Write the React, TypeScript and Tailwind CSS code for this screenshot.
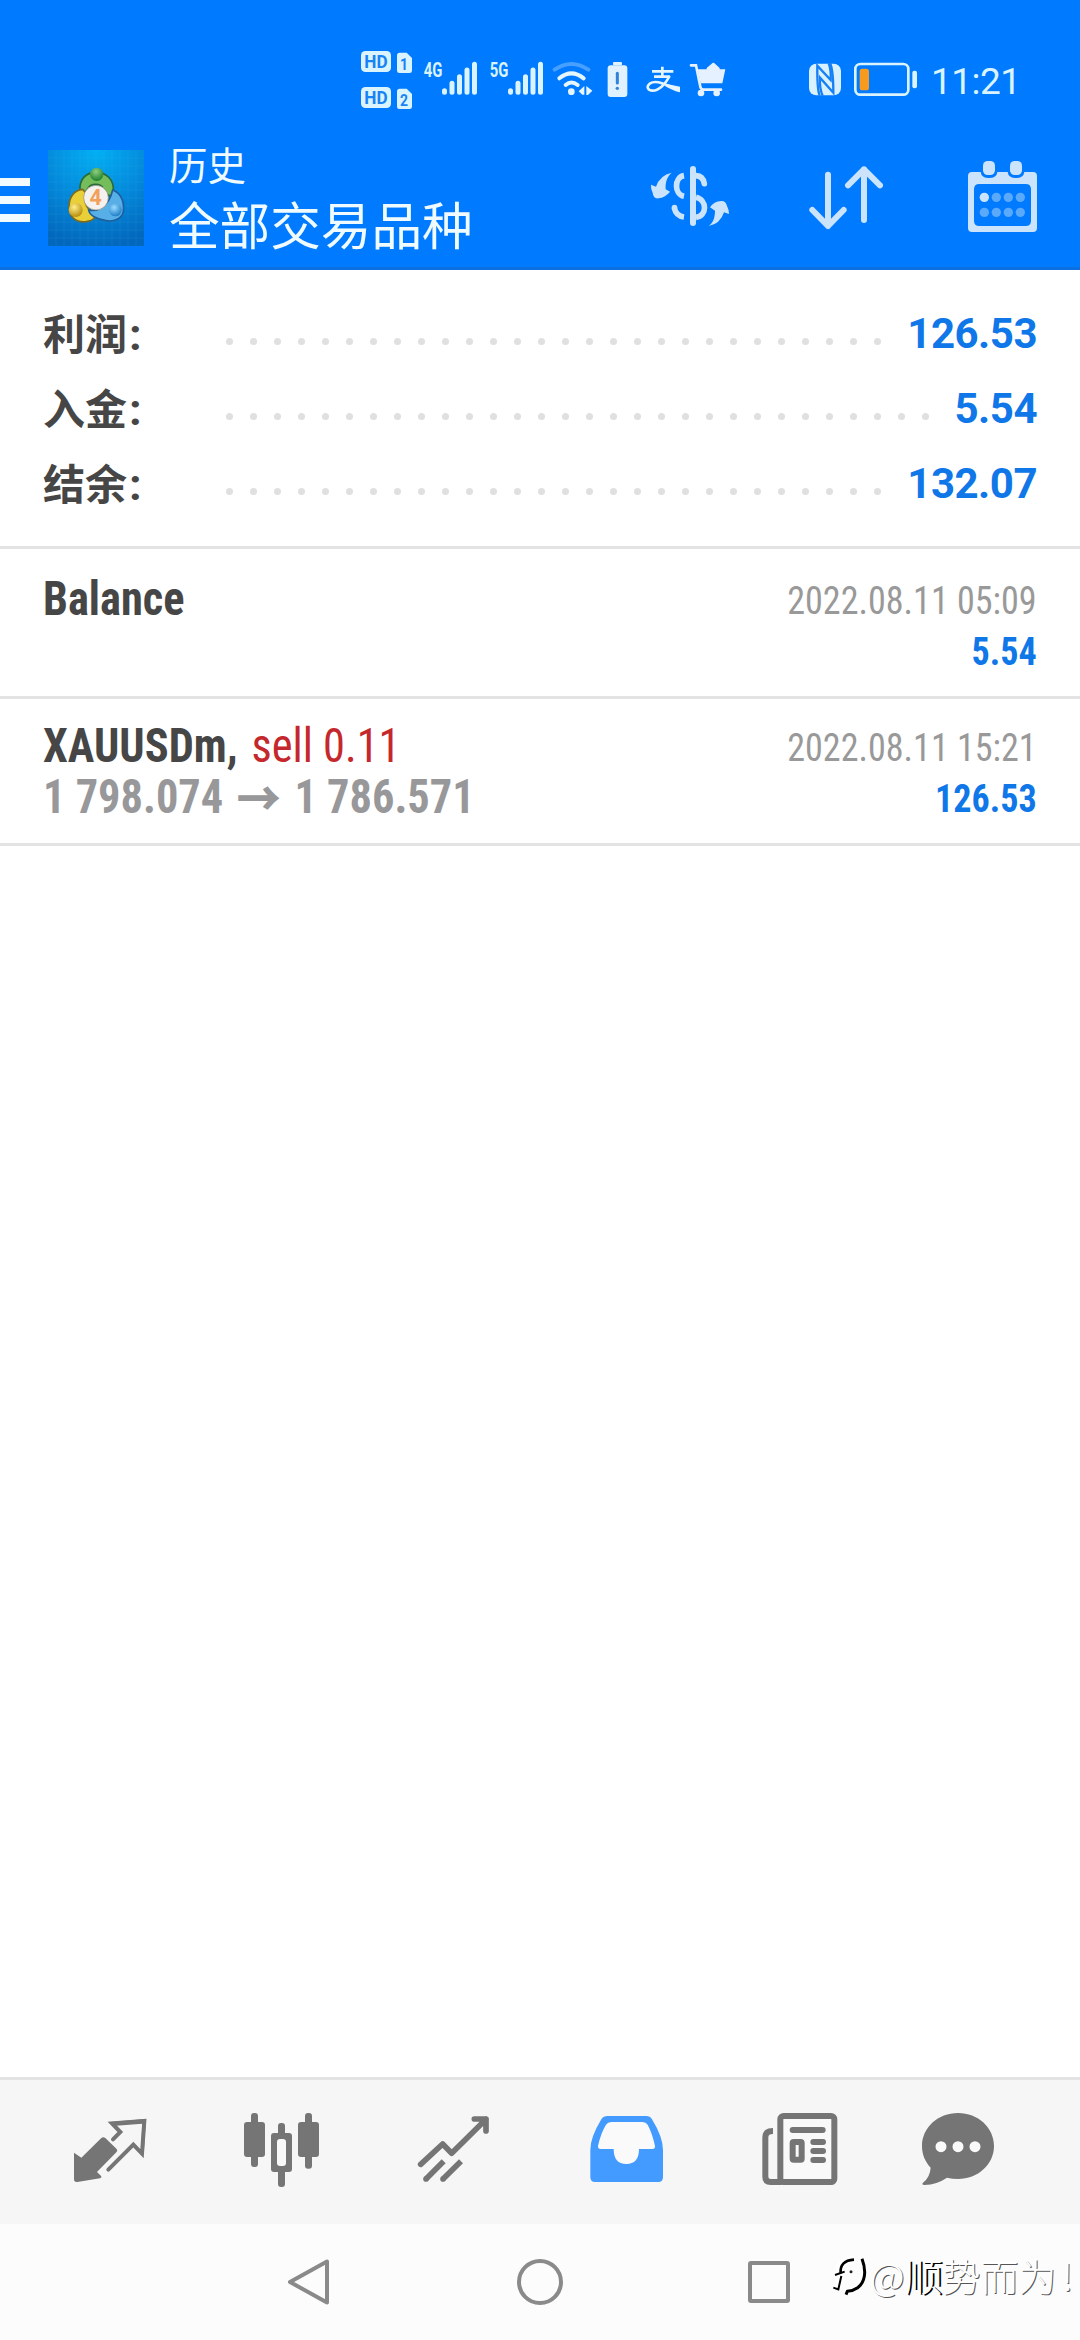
interface SummaryRowProps {
	label: string;
	value: string;
	dots: number;
}

interface HistoryItemProps {
	name: string;
	side?: string;
	open?: string;
	close?: string;
	time: string;
	profit: string;
}

function SimBadge({ y, n }: { y: number; n: number }) {
	return (
		<g>
			<rect x="63" y={y} width="90" height="63" rx="13" fill="#d9f3ff" />
			<text
				x="108"
				y={y + 51}
				textAnchor="middle"
				textLength="70"
				lengthAdjust="spacingAndGlyphs"
				fontSize="56"
				fontWeight="700"
				fill="#1783f5"
			>
				HD
			</text>
			<path
				d={`M179 ${y + 5}h21l16 16v38q0 7-7 7h-31q-7 0-7-7v-46q0-8 8-8z`}
				fill="#d9f3ff"
			/>
			<text
				x="192"
				y={y + 56}
				textAnchor="middle"
				textLength="24"
				lengthAdjust="spacingAndGlyphs"
				fontSize="52"
				fontWeight="700"
				fill="#1783f5"
			>
				{n}
			</text>
		</g>
	);
}

function Signal({ label }: { label: string }) {
	return (
		<svg viewBox="249 60 165 180" className="w-[55px] h-[60px]">
			<text
				x="251"
				y="141"
				textLength="56"
				lengthAdjust="spacingAndGlyphs"
				fontSize="62"
				fontWeight="700"
				fill="#d9f3ff"
			>
				{label}
			</text>
			<g stroke="#d9f3ff" strokeWidth="15" strokeLinecap="round">
				<path d="M313.500 182v5M336 160v27M358.500 140v47M381 120v67M403.500 103v84" />
			</g>
		</svg>
	);
}

function StatusBar() {
	return (
		<div className="flex flex-row h-[128px] pt-[50px] pl-[360px]">
			<svg viewBox="60 60 159 180" className="w-[53px] h-[60px]">
				<SimBadge y={63} n={1} />
				<SimBadge y={171} n={2} />
			</svg>
			<div className="ml-[10px]">
				<Signal label="4G" />
			</div>
			<div className="ml-[11px]">
				<Signal label="5G" />
			</div>
			<svg viewBox="636 60 123 180" className="ml-[8px] w-[41px] h-[60px]">
				<g fill="none" strokeWidth="12" strokeLinecap="round">
					<path d="M644 119Q694 85 745 119" stroke="#47a0ff" />
					<path d="M658 145Q694 115 731 145" stroke="#e6f6ff" />
					<path d="M677 165Q694 150 713 165" stroke="#e6f6ff" />
				</g>
				<circle cx="694" cy="185" r="10" fill="#e6f6ff" />
				<path d="M716 184l17-16v26h-6zM739 168l18 14-13 13h-5z" fill="#e6f6ff" />
			</svg>
			<svg viewBox="801 60 63 180" className="ml-[14px] w-[21px] h-[60px]">
				<rect x="819" y="96" width="27" height="10" rx="3" fill="#e0f1ff" />
				<rect x="803" y="106" width="59" height="95" rx="9" fill="#e0f1ff" />
				<path d="M832 130v29" stroke="#2f83d8" strokeWidth="9" strokeLinecap="round" />
				<circle cx="832" cy="175" r="5" fill="#2f83d8" />
			</svg>
			<svg viewBox="918 60 105 180" className="ml-[18px] w-[35px] h-[60px]">
				<g fill="none" stroke="#e6f6ff" strokeWidth="8">
					<path d="M936 124h64M967 110v31M942 140h48" />
					<path d="M989 138C975 165 955 182 938 182C922 182 919 169 929 161C950 147 975 165 1018 180" />
				</g>
				<path d="M985 163l35 7v17q-20-4-45-19z" fill="#e6f6ff" />
			</svg>
			<svg viewBox="1047 60 111 180" className="ml-[8px] w-[37px] h-[60px]">
				<path
					d="M1053 106h15l13 64q2 9 10 9h52"
					fill="none"
					stroke="#e6f1ff"
					strokeWidth="8"
					strokeLinecap="round"
				/>
				<path d="M1073 118h83l-9 42h-65zM1100 119v-5l15-13q5-5 10 0l14 13v5z" fill="#e6f1ff" />
				<circle cx="1083" cy="189" r="10" fill="#e6f1ff" />
				<circle cx="1130" cy="189" r="10" fill="#e6f1ff" />
			</svg>
			<svg viewBox="204 60 102 180" className="ml-[82px] w-[34px] h-[60px]">
				<rect x="207" y="101" width="96" height="95" rx="22" fill="#d9f0ff" />
				<g fill="none" stroke="#1680f5" strokeWidth="7">
					<path d="M239 197Q231 176 232 107L272 150Q274 120 266 100" />
					<path d="M270 98Q280 120 280 188L240 143Q238 176 248 197" />
				</g>
			</svg>
			<svg viewBox="339 60 195 180" className="ml-[11px] w-[65px] h-[60px]">
				<rect x="346" y="102" width="159" height="92" rx="15" fill="none" stroke="#d9f3ff" strokeWidth="8" />
				<rect x="359" y="116" width="28" height="65" rx="8" fill="#f79a1e" />
				<rect x="517" y="122" width="14" height="53" rx="6" fill="#d9f3ff" />
			</svg>
			<div className="ml-[13px] h-[62px] leading-[63px] text-[37px] text-[#d9f3ff] tracking-[-0.5px]">
				11:21
			</div>
		</div>
	);
}

function Logo() {
	return (
		<svg viewBox="144 60 288 288" className="ml-[18px] w-[96px] h-[96px]">
			<defs>
				<radialGradient id="sky" cx="0.5" cy="0" r="1">
					<stop offset="0" stopColor="#02b0f4" />
					<stop offset="0.55" stopColor="#0488da" />
					<stop offset="1" stopColor="#0268bd" />
				</radialGradient>
				<radialGradient id="green" cx="0.45" cy="0.3" r="0.7">
					<stop offset="0" stopColor="#8fcf80" />
					<stop offset="1" stopColor="#1d7f2c" />
				</radialGradient>
				<radialGradient id="gold" cx="0.4" cy="0.3" r="0.7">
					<stop offset="0" stopColor="#fff08a" />
					<stop offset="1" stopColor="#b98d0c" />
				</radialGradient>
				<radialGradient id="blue" cx="0.4" cy="0.3" r="0.7">
					<stop offset="0" stopColor="#9bdcff" />
					<stop offset="1" stopColor="#1f7fc8" />
				</radialGradient>
			</defs>
			<rect x="144" y="60" width="288" height="288" fill="url(#sky)" />
			<path
				d="M168 60v288M192 60v288M216 60v288M240 60v288M264 60v288M288 60v288M312 60v288M336 60v288M360 60v288M384 60v288M408 60v288M144 84h288M144 108h288M144 132h288M144 156h288M144 180h288M144 204h288M144 228h288M144 252h288M144 276h288M144 300h288M144 324h288"
				stroke="#5cc4f5"
				strokeOpacity="0.18"
				strokeWidth="2"
			/>
			<g strokeWidth="5">
				<path
					d="M240 178C238 150 256 127 288 127C320 127 342 150 340 182C336 205 322 200 312 178C302 158 272 158 262 178C256 190 242 190 240 178z"
					fill="#74bd5a"
					stroke="#276b38"
				/>
				<path
					d="M248 178C222 180 207 202 207 232C208 262 228 278 258 275C282 272 292 258 282 248C262 240 250 220 258 190z"
					fill="#e9cf38"
					stroke="#7d6a20"
				/>
				<path
					d="M338 180C360 188 374 212 370 244C366 266 342 276 318 272C290 268 268 256 266 240C290 246 326 232 338 180z"
					fill="#58afe8"
					stroke="#1d5f9c"
				/>
			</g>
			<circle cx="290" cy="133" r="20" fill="url(#green)" />
			<circle cx="227" cy="240" r="21" fill="url(#gold)" />
			<circle cx="346" cy="240" r="19" fill="url(#blue)" />
			<circle cx="288" cy="203" r="37" fill="#f4f1ee" stroke="#8d8a72" strokeWidth="2" />
			<text x="287" y="226" textAnchor="middle" fontSize="64" fontWeight="700" fill="#f2a05a">
				4
			</text>
		</svg>
	);
}

function Toolbar() {
	return (
		<div className="flex flex-row items-center h-[139px]">
			<div className="flex flex-col gap-[10px] w-[30px] pt-[5px]">
				<div className="h-[8px] bg-[#f0faff]" />
				<div className="h-[8px] bg-[#f0faff]" />
				<div className="h-[8px] bg-[#f0faff]" />
			</div>
			<Logo />
			<div className="ml-[25px] w-[481px] flex flex-col text-[#effbff] font-['Noto_Sans_CJK_SC',sans-serif]">
				<div className="text-[38.5px] leading-[50px]">历史</div>
				<div className="text-[50.6px] leading-[70px]">全部交易品种</div>
			</div>
			<svg viewBox="90 60 240 225" className="w-[80px] h-[75px]">
				<g fill="none" stroke="#cbe4fb" strokeLinecap="round">
					<path d="M219 87v162" strokeWidth="18" />
					<path d="M228 107Q249 108 253 131" strokeWidth="17" />
					<path d="M163 204Q168 228 192 231" strokeWidth="17" strokeLinecap="butt" />
					<path d="M192 107C162 112 162 163 192 169" strokeWidth="17" strokeLinecap="butt" />
					<path d="M228 172C262 180 262 228 228 232" strokeWidth="17" strokeLinecap="butt" />
				</g>
				<circle cx="163.500" cy="203" r="8.500" fill="#cbe4fb" />
				<path d="M155 98C139 112 136 130 137 148L150 155Q137 172 115 175Q100 177 98 158Q92 147 93 134L108 140Q120 105 155 98z" fill="#cbe4fb" />
				<path d="M266 258C280 248 285 232 285 212L270 202Q281 184 304 183Q317 182 321 198Q327 209 327 222L312 217Q301 252 266 258z" fill="#cbe4fb" />
			</svg>
			<svg viewBox="567 60 222 225" className="ml-[79px] w-[74px] h-[75px]">
				<path
					d="M624 104v154M577 210l47 48 47-48M732 240V88M684 136l48-48 48 48"
					fill="none"
					stroke="#cbe4fb"
					strokeWidth="18"
					strokeLinecap="round"
					strokeLinejoin="round"
				/>
			</svg>
			<svg viewBox="1041 60 213 225" className="ml-[84px] w-[71px] h-[75px]">
				<path
					d="M1056 96h26q2 18 25 18t25-18h31q2 18 25 18t25-18h26q12 0 12 12v156q0 12-12 12h-183q-12 0-12-12v-156q0-12 12-12zM1078 132q-16 0-16 16v94q0 16 16 16h139q16 0 16-16v-94q0-16-16-16z"
					fill="#cbe4fb"
					fillRule="evenodd"
				/>
				<rect x="1089" y="63" width="36" height="42" rx="14" fill="#cbe4fb" />
				<rect x="1170" y="63" width="36" height="42" rx="14" fill="#cbe4fb" />
				<circle cx="1093" cy="172" r="14" fill="#cbe4fb" />
				<g fill="#5aa9fb">
					<circle cx="1129" cy="172" r="14" />
					<circle cx="1165" cy="172" r="14" />
					<circle cx="1201" cy="172" r="14" />
					<circle cx="1093" cy="217" r="14" />
					<circle cx="1129" cy="217" r="14" />
					<circle cx="1165" cy="217" r="14" />
					<circle cx="1201" cy="217" r="14" />
				</g>
			</svg>
		</div>
	);
}

function SummaryRow({ label, value, dots }: SummaryRowProps) {
	return (
		<div className="flex flex-row items-center h-[75px]">
			<div className="w-[183px] pt-[2px] text-[42px] leading-[75px] font-bold text-[#464646] whitespace-nowrap">
				{label}
				<span className="ml-[2px] text-[45px]">:</span>
			</div>
			<div className="flex flex-row gap-[17px] pt-[16px]">
				{Array.from({ length: dots }, (_, i) => (
					<div key={i} className="w-[7px] h-[7px] rounded-full bg-[#e0e0e0]" />
				))}
			</div>
			<div className="ml-auto text-[42px] leading-[75px] font-bold text-[#0f77e8] tracking-[-0.5px]">
				{value}
			</div>
		</div>
	);
}

function HistoryItem({ name, side, open, close, time, profit }: HistoryItemProps) {
	return (
		<div className="flex flex-row justify-between h-[147px] pt-[21px] pl-[43px] pr-[43px] border-b-[3px] border-[#e3e3e3] font-stretch-condensed font-['Roboto_Condensed',Roboto,sans-serif]">
			<div className="flex flex-col text-[48px] leading-[51px] whitespace-nowrap origin-left scale-x-[0.925]">
				<div className="flex flex-row gap-[15px]">
					<div className="font-bold text-[#464646]">{name}</div>
					{side && <div className="text-[#c4282d]">{side}</div>}
				</div>
				{open && (
					<div className="flex flex-row font-bold text-[#98989a]">
						<div>{open}</div>
						<div className="w-[77px] text-center leading-[48px] font-black font-['Noto_Sans_CJK_SC',sans-serif]">
							→
						</div>
						<div>{close}</div>
					</div>
				)}
			</div>
			<div className="flex flex-col pt-[3px] text-[39px] leading-[51px] text-right origin-right scale-x-[0.925]">
				<div className="text-[#999999]">{time}</div>
				<div className="font-bold text-[#0f77e8]">{profit}</div>
			</div>
		</div>
	);
}

function TabBar() {
	return (
		<div className="flex flex-row items-center h-[147px] pl-[73px] bg-[#f6f6f6] border-t-[3px] border-[#e3e3e3]">
			<svg viewBox="99 156 222 240" className="w-[74px] h-[80px]">
				<path
					d="M102 278L124 293L184 234Q190 229 196 234L230 267Q234 272 229 277L171 336L184 349Q185 354 180 355L112 366Q102 367 102 358z"
					fill="#757575"
				/>
				<path
					d="M219 238L241 216L216 190L313 183L306 281L280 254L205 329"
					fill="none"
					stroke="#757575"
					strokeWidth="12"
					strokeLinecap="round"
				/>
				<path d="M211 186l107-9-7 108-8-2 4-92-88 7z" fill="#757575" />
			</svg>
			<svg viewBox="609 156 231 240" className="ml-[96px] w-[77px] h-[80px]">
				<g fill="#757575">
					<rect x="633" y="159" width="21" height="162" rx="9" />
					<rect x="612" y="186" width="63" height="105" rx="9" />
					<rect x="795" y="159" width="21" height="167" rx="9" />
					<rect x="774" y="186" width="63" height="105" rx="9" />
					<rect x="714" y="189" width="21" height="192" rx="9" />
					<rect x="693" y="219" width="63" height="117" rx="9" />
				</g>
				<rect x="711" y="237" width="27" height="81" rx="9" fill="#f8f8f8" />
			</svg>
			<svg viewBox="1131 156 219 240" className="ml-[97px] w-[73px] h-[80px]">
				<path
					d="M1142 313L1208 252L1235 280L1338 178M1303 177h35v36"
					fill="none"
					stroke="#757575"
					strokeWidth="17"
					strokeLinecap="round"
					strokeLinejoin="round"
				/>
				<path d="M1158 357L1211 304M1209 357L1263 304" stroke="#757575" strokeWidth="17" />
				<circle cx="1158" cy="357" r="8.500" fill="#757575" />
				<circle cx="1209" cy="357" r="8.500" fill="#757575" />
			</svg>
			<svg viewBox="150 156 219 240" className="ml-[100px] w-[73px] h-[80px]">
				<path
					d="M203 168H319Q330 168 336 178Q369 232 369 270V352Q369 366 355 366H165Q151 366 151 352V270Q151 232 184 178Q190 168 203 168z"
					fill="#439bff"
				/>
				<path
					d="M214 186H307Q318 186 323 194Q337 220 345 258Q346 267 337 267H297C297 297 284 312 259 312C234 312 221 297 221 267H182Q173 267 174 258Q182 220 198 194Q203 186 214 186z"
					fill="#fafafa"
				/>
			</svg>
			<svg viewBox="666 156 228 240" className="ml-[99px] w-[76px] h-[80px]">
				<g fill="none" stroke="#757575" strokeWidth="18">
					<rect x="721" y="168" width="162" height="198" rx="10" fill="#f9f9f9" />
					<path d="M699 213Q676 213 676 232V350Q676 366 692 366H725" />
				</g>
				<g stroke="#757575" strokeWidth="18" strokeLinecap="round">
					<path d="M758 210h90M820 246h29M820 273h29M820 300h29" />
				</g>
				<rect x="758" y="246" width="27" height="53" rx="3" fill="#f9f9f9" stroke="#757575" strokeWidth="18" />
			</svg>
			<svg viewBox="1143 156 222 240" className="ml-[83px] w-[74px] h-[80px]">
				<path
					d="M1254 159C1314 159 1362 203 1362 258C1362 313 1314 357 1254 357Q1236 357 1221 353Q1190 374 1154 375Q1143 374 1149 368Q1170 352 1172 323C1156 306 1146 284 1146 258C1146 203 1194 159 1254 159z"
					fill="#757575"
				/>
				<g fill="#fafafa">
					<circle cx="1203" cy="260" r="16.500" />
					<circle cx="1254" cy="260" r="16.500" />
					<circle cx="1305" cy="260" r="16.500" />
				</g>
			</svg>
		</div>
	);
}

function SystemNav() {
	return (
		<div className="relative flex flex-row items-center h-[116px] pl-[287px] bg-[#fcfcfc]">
			<svg viewBox="0 0 43 48" className="w-[43px] h-[48px]">
				<path d="M40 3.500V44.500L3 24z" fill="none" stroke="#8a8a8a" strokeWidth="4" strokeLinejoin="round" />
			</svg>
			<div className="ml-[187px] w-[46px] h-[46px] rounded-full border-4 border-[#8a8a8a]" />
			<div className="ml-[185px] w-[42px] h-[42px] rounded-[3px] border-4 border-[#8a8a8a]" />
			{/* author mark laid over the corner */}
			<div className="absolute left-[830px] top-[26px] flex flex-row items-center">
				<svg viewBox="60 60 120 150" className="w-[40px] h-[50px]">
					<g fill="none">
						<path d="M88 132V112Q95 84 132 84M82 172L94 132M74 134L94 122M164 84Q176 140 128 172L112 188" stroke="#ffffff" strokeWidth="22" />
						<path d="M92 124Q88 86 132 83" stroke="#000000" strokeWidth="8" />
						<path d="M75 129L104 119M94 132L85 172L70 167" stroke="#000000" strokeWidth="6" />
						<path d="M156 80C171 120 164 152 143 167Q130 176 112 178L108 188" stroke="#000000" strokeWidth="9" />
					</g>
					<circle cx="123" cy="119" r="4.500" fill="#222222" />
				</svg>
				<div className="text-[38px] leading-[50px] h-[54px] font-light text-white whitespace-nowrap [text-shadow:1px_1px_0_#555555] font-['Noto_Sans_CJK_SC',sans-serif]">
					@<span className="[text-shadow:2px_1px_0_#000000]">顺</span>势而为
					<span className="ml-[5px]">!</span>
				</div>
			</div>
		</div>
	);
}

export default function App() {
	let summary = [
		{ label: "利润", value: "126.53", dots: 28 },
		{ label: "入金", value: "5.54", dots: 30 },
		{ label: "结余", value: "132.07", dots: 28 },
	];
	let history = [
		{ name: "Balance", time: "2022.08.11 05:09", profit: "5.54" },
		{
			name: "XAUUSDm,",
			side: "sell 0.11",
			open: "1 798.074",
			close: "1 786.571",
			time: "2022.08.11 15:21",
			profit: "126.53",
		},
	];
	return (
		<div className="flex flex-col w-[1080px] h-[2340px] overflow-hidden bg-white font-[Roboto,'Noto_Sans_CJK_SC',sans-serif]">
			<div className="flex flex-col h-[270px] bg-[#007aff] border-b-[3px] border-[#0a6fe0]">
				<StatusBar />
				<Toolbar />
			</div>
			<div className="flex flex-col h-[279px] pt-[26px] pl-[43px] pr-[43px] border-b-[3px] border-[#e3e3e3]">
				{summary.map((row) => (
					<SummaryRow key={row.label} label={row.label} value={row.value} dots={row.dots} />
				))}
			</div>
			<div className="flex flex-col flex-1 pt-[3px]">
				{history.map((item) => (
					<HistoryItem key={item.name} {...item} />
				))}
			</div>
			<TabBar />
			<SystemNav />
		</div>
	);
}
